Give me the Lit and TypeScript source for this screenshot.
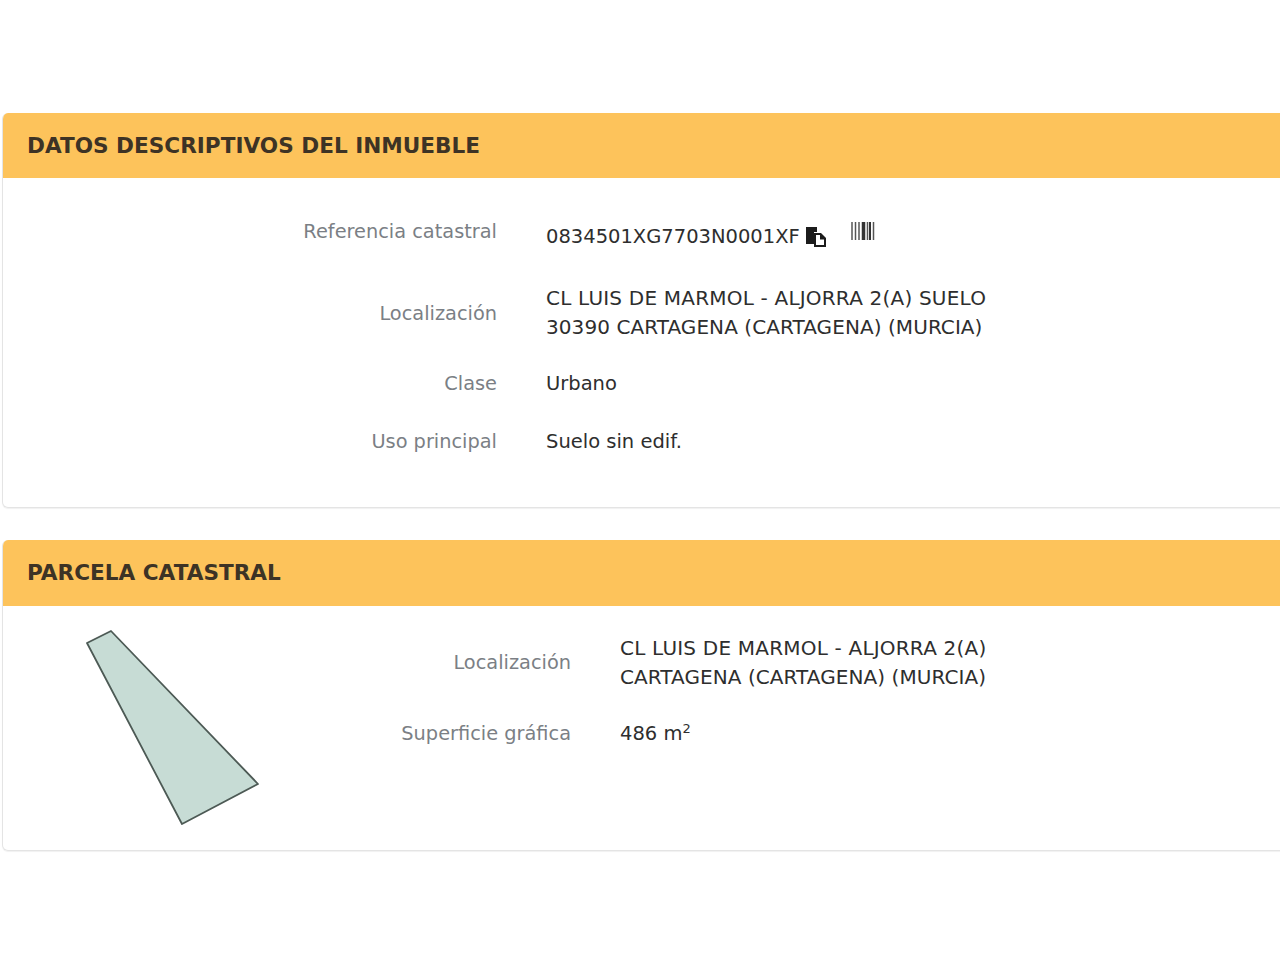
import { LitElement, html, css } from "lit";
import { customElement } from "lit/decorators.js";

@customElement("app-root")
export class AppRoot extends LitElement {
  static styles = css`
    :host { display: block; height: 960px; overflow: hidden; background: #fff; font-family: "DejaVu Sans", Verdana, sans-serif; font-size: 19.5px; color: #333; }
    .page { padding: 113px 0 0 2px; display: flex; flex-direction: column; gap: 32px; width: 1300px; }
    .card { border: 1px solid #e4e4e4; border-top: 0; border-radius: 6px; overflow: hidden; box-shadow: 0 1px 1px rgba(0,0,0,.06); }
    .head { height: 65px; background: #fdc35b; display: flex; align-items: center; padding-left: 24px; font-weight: 700; font-size: 21.6px; color: #3d3325; box-sizing: border-box; }
    .head2 { height: 66px; padding-bottom: 2px; }
    .body1 { height: 329px; padding-top: 24px; box-sizing: border-box; }
    .row { display: grid; column-gap: 49px; align-items: center; }
    .r1 { grid-template-columns: 494px 1fr; }
    .label { text-align: right; color: #7b7f85; font-size: 19.35px; }
    .value { color: #2e2e2e; line-height: 29px; white-space: nowrap; }
    .wide { font-size: 20px; letter-spacing: .2px; }
    .mid { font-size: 20px; letter-spacing: .07px; }
    .ref { height: 58px; }
    .ref .label { align-self: start; padding-top: 18px; }
    .ref .value { display: flex; align-items: flex-start; padding-top: 11px; }
    .loc { height: 58px; margin-top: 24px; }
    .clase { height: 57px; margin-top: 13px; }
    .uso { height: 58px; }
    .icon { margin-left: 5px; margin-top: 4px; flex: none; }
    .bar { margin-left: 24px; margin-top: 0; flex: none; }
    .body2 { height: 244px; display: flex; }
    .shape { width: 260px; flex: none; }
    .r2 { grid-template-columns: 308px 1fr; }
    .rows2 { padding-top: 26px; display: flex; flex-direction: column; }
    .lower { padding-top: 2px; }
    .sup { height: 58px; margin-top: 12px; }
    sup { font-size: 13px; line-height: 0; }
  `;

  render() {
    return html`<div class="page">
      <section class="card">
        <div class="head">DATOS DESCRIPTIVOS DEL INMUEBLE</div>
        <div class="body1">
          <div class="row r1 ref">
            <div class="label">Referencia catastral</div>
            <div class="value">0834501XG7703N0001XF<svg class="icon" width="22" height="22" viewBox="0 0 22 22"><path d="M1 1h11v5H9v12H1z" fill="#1c1c1c"/><path d="M9 7h7l5 5v9H9z" fill="#1c1c1c"/><path d="M11 9h4v4.5h4V19h-8z" fill="#fff"/></svg><svg class="bar" width="24" height="18" viewBox="0 0 24 18"><path d="M1 0v18M4.500 0v18M8 0v18M16.500 0v18M22.500 0v18" stroke="#555" stroke-width="1.500"/><path d="M12.500 0v18" stroke="#333" stroke-width="3.500"/><path d="M19 0v18" stroke="#333" stroke-width="2"/></svg></div>
          </div>
          <div class="row r1 loc">
            <div class="label">Localización</div>
            <div class="value"><span class="wide">CL LUIS DE MARMOL - ALJORRA 2(A) SUELO</span><br /><span class="mid">30390 CARTAGENA (CARTAGENA) (MURCIA)</span></div>
          </div>
          <div class="row r1 clase">
            <div class="label">Clase</div>
            <div class="value">Urbano</div>
          </div>
          <div class="row r1 uso">
            <div class="label">Uso principal</div>
            <div class="value">Suelo sin edif.</div>
          </div>
        </div>
      </section>
      <section class="card">
        <div class="head head2">PARCELA CATASTRAL</div>
        <div class="body2">
          <svg class="shape" width="260" height="244" viewBox="0 0 260 244"><path d="M84 37 L108 25 L255 178 L179 218 Z" fill="#c7dcd5" stroke="#4d5a55" stroke-width="1.8" stroke-linejoin="round"/></svg>
          <div class="rows2">
            <div class="row r2">
              <div class="label">Localización</div>
              <div class="value lower"><span class="wide">CL LUIS DE MARMOL - ALJORRA 2(A)</span><br /><span class="mid">CARTAGENA (CARTAGENA) (MURCIA)</span></div>
            </div>
            <div class="row r2 sup">
              <div class="label">Superficie gráfica</div>
              <div class="value">486 m<sup>2</sup></div>
            </div>
          </div>
        </div>
      </section>
    </div>`;
  }
}
